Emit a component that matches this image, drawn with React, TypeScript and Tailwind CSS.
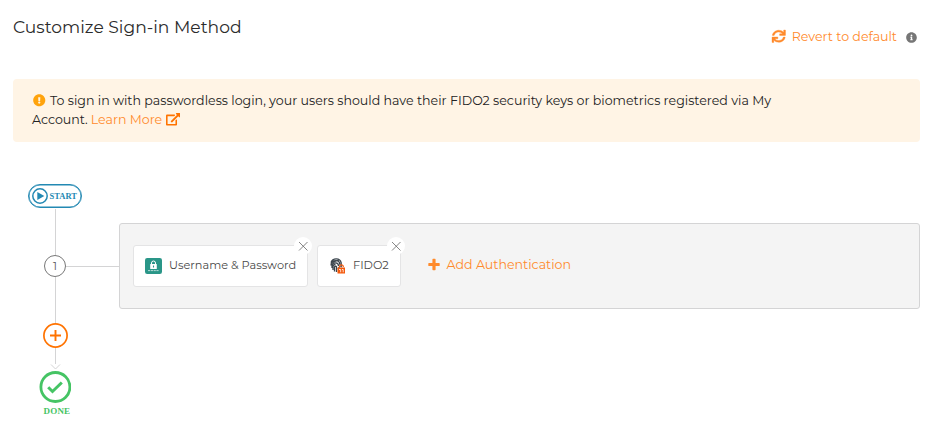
import React from "react";
import { FaSync, FaInfoCircle, FaExclamationCircle } from "react-icons/fa";

const font = "font-[Montserrat,Inter,sans-serif]";

function CloseBadge() {
  return (
    <button className="absolute -right-[5px] -top-[9px] flex size-[18px] items-center justify-center rounded-full bg-white">
      <svg viewBox="0 0 10 10" className="size-[10px]" stroke="#666" strokeWidth="0.8">
        <path d="M1 1 9.500 9.500M9.500 1 1 9.500" />
      </svg>
    </button>
  );
}

function PlusIcon() {
  return (
    <svg viewBox="0 0 448 512" className="mb-px h-[13px] w-[12px]" fill="currentColor">
      <path d="M448 294.200v-76.400c0-13.300-10.700-24-24-24H286.200V56c0-13.300-10.700-24-24-24h-76.400c-13.300 0-24 10.700-24 24v137.800H24c-13.300 0-24 10.700-24 24v76.400c0 13.300 10.700 24 24 24h137.800V456c0 13.300 10.700 24 24 24h76.400c13.300 0 24-10.700 24-24V318.200H424c13.300 0 24-10.700 24-24z" />
    </svg>
  );
}

function ExternalIcon() {
  return (
    <svg viewBox="0 0 576 512" className="ml-[4px] h-[12.600px] w-[14.200px]" fill="#ff7300">
      <path d="M576 24v127.984c0 21.461-25.960 31.980-40.971 16.971l-35.707-35.709-243.523 243.523c-9.373 9.373-24.568 9.373-33.941 0l-22.627-22.627c-9.373-9.373-9.373-24.569 0-33.941L442.756 76.676l-35.703-35.705C391.982 25.900 402.656 0 424.024 0H552c13.255 0 24 10.745 24 24zM407.029 270.794l-16 16A23.999 23.999 0 0 0 384 303.765V448H64V128h264a24.003 24.003 0 0 0 16.970-7.029l16-16C376.089 89.851 365.381 64 344 64H48C21.490 64 0 85.490 0 112v352c0 26.510 21.490 48 48 48h352c26.510 0 48-21.490 48-48V287.764c0-21.382-25.852-32.090-40.971-16.970z" />
    </svg>
  );
}

function LockIcon() {
  return (
    <svg viewBox="0 0 17 16" className="h-4 w-[17px] shrink-0">
      <rect width="17" height="16" rx="2.2" fill="#2a9688" />
      <path d="M6.500 6.500V5a2 2 0 0 1 4 0v1.500" fill="none" stroke="#fff" strokeWidth="1" />
      <rect x="5.200" y="6.100" width="6.600" height="4.900" rx="0.5" fill="#fff" />
      <path d="M8.5 7.500v2" stroke="#2a9688" strokeWidth="1.1" />
      <path d="M3 12.600h11" stroke="#c4e3df" strokeWidth="0.9" strokeDasharray="2.200 .6" />
    </svg>
  );
}

function FidoIcon() {
  return (
    <svg viewBox="0 0 15 16" className="h-4 w-[15px] shrink-0" fill="none">
      <path d="M1 4.500C2 1.500 4 .8 6.200.8s4.400 1 5 4v4.500M1 7.500c0-4 2-4.800 5-4.800 2.500 0 3.800 1 3.800 4M2 10V7.500C2 5.500 3.500 4.800 5.800 4.800S8.500 6 8.500 8M3 12V8.500c0-1.500 1-2 2.500-2M4.500 13.500V9c0-1 2-1.200 2 0v5M2 4.500 9 2M8 11l2-3" stroke="#3b454d" strokeWidth="1.300" />
      <path d="M9.500 9V8.800a1.800 1.800 0 0 1 3.800 0V9" stroke="#f4580b" strokeWidth="1.200" />
      <rect x="7.500" y="9.500" width="7.500" height="6" fill="#f4580b" />
      <path d="M9 11.500h1.700v2.800M12 11.500h1.200v2.800" stroke="#fff" strokeWidth=".8" />
    </svg>
  );
}

function Timeline() {
  return (
    <div className="flex w-[106px] shrink-0 flex-col">
      <div className="ml-[15px] flex h-6 w-[54px] items-center rounded-full border-[1.500px] border-[#2389b3] pl-[2.500px] shadow-[inset_0_0_0_0.500px_#2389b3]">
        <svg viewBox="0 0 16 16" className="size-4 shrink-0">
          <circle cx="8" cy="8" r="7.200" fill="none" stroke="#2389b3" strokeWidth="1.500" />
          <path d="M5.300 4v8L12.300 8z" fill="#2389b3" />
        </svg>
        <span className="ml-[2px] font-['Liberation_Serif',serif] text-[8.500px] font-bold leading-none text-[#2389b3]">START</span>
      </div>
      <div className="ml-[42px] mt-px h-[46px] w-px bg-[#d4d4d5]" />
      <div className="flex items-center">
        <div className={`ml-[31px] flex size-[22px] items-center justify-center rounded-full border border-[#777] text-[11px] text-[#555] ${font}`}>1</div>
        <div className="h-px flex-1 bg-[#d4d4d5]" />
      </div>
      <div className="ml-[42px] h-[46px] w-px bg-[#d4d4d5]" />
      <svg viewBox="0 0 25 25" className="ml-[30px] size-[25px]" fill="none" stroke="#ff7300">
        <circle cx="12.500" cy="12.500" r="11.600" strokeWidth="1.700" />
        <path d="M7 12.500h11M12.500 7v11" strokeWidth="1.900" />
      </svg>
      <svg viewBox="0 0 11 22" className="ml-[37px] h-[22px] w-[11px]" fill="none" stroke="#d4d4d5">
        <path d="M5.500 0v16M1 16.500l4.500 4.500 4.500-4.500" />
      </svg>
      <svg viewBox="0 0 32 32" className="ml-[26px] mt-px size-8" fill="none" stroke="#45c464">
        <circle cx="16.400" cy="16" r="14.500" strokeWidth="2.800" />
        <path d="m9.200 16.200 4.300 4.300 9.300-9" strokeWidth="3" />
      </svg>
      <span className="ml-[30.500px] mt-[3px] font-['Liberation_Serif',serif] text-[9px] font-bold leading-[10px] tracking-[0.200px] text-[#45c464]">DONE</span>
    </div>
  );
}

export default function App() {
  return (
    <main className={`h-[428px] overflow-hidden bg-white px-3 pl-[13px] text-[#2b2b2b] ${font}`}>
      <header className="flex h-[79px] justify-between">
        <h1 className="mt-[15px] whitespace-nowrap text-[17.140px] leading-6">Customize Sign-in Method</h1>
        <div className="mr-[3.500px] mt-[26px] flex h-[22px] items-center text-[#ff8a2b]">
          <FaSync preserveAspectRatio="none" stroke="currentColor" strokeWidth={14} className="mb-px h-[12.500px] w-[13.500px] overflow-visible" />
          <span className="ml-[6.500px] whitespace-nowrap text-[12.620px]">Revert to default</span>
          <FaInfoCircle className="ml-[8.500px] size-[11px] text-[#767676]" />
        </div>
      </header>
      <section className="h-[63px] rounded-[4px] bg-[#fff4e5] pl-[19px] pt-3 text-[12.620px] leading-[19px] text-[#222]">
        <p className="flex items-center whitespace-nowrap">
          <FaExclamationCircle className="ml-px mr-[4.500px] size-[12.500px] text-[#ffa30c]" />
          <span>To sign in with passwordless login, your users should have their FIDO2 security keys or biometrics registered via My</span>
        </p>
        <p className="flex items-center whitespace-nowrap">
          <span>Account.</span>
          <a className="ml-[3px] flex items-center text-[#ff8a2b]">
            Learn More
            <ExternalIcon />
          </a>
        </p>
      </section>
      <section className="mt-[42px] flex">
        <Timeline />
        <div className="mt-[39px] flex h-[86px] flex-1 items-center rounded-[3px] border border-[#d4d4d5] bg-[#f4f4f4] pl-[13px] text-[#555]">
          <div className="relative flex h-[42px] w-[175px] items-center rounded-[3px] border border-[#e4e4e5] bg-white pl-[11px]">
            <LockIcon />
            <span className="ml-[7px] whitespace-nowrap text-[11.340px] text-[#4a4a4a]">Username & Password</span>
            <CloseBadge />
          </div>
          <div className="relative ml-[9px] flex h-[42px] w-[84px] items-center rounded-[3px] border border-[#e4e4e5] bg-white pl-3">
            <FidoIcon />
            <span className="ml-[8px] text-[11.340px] text-[#4a4a4a]">FIDO2</span>
            <CloseBadge />
          </div>
          <div className="mb-[2px] ml-[27px] flex items-center text-[#ff8a2b]">
            <PlusIcon />
            <span className="ml-[6.500px] whitespace-nowrap text-[12.620px]">Add Authentication</span>
          </div>
        </div>
      </section>
    </main>
  );
}
